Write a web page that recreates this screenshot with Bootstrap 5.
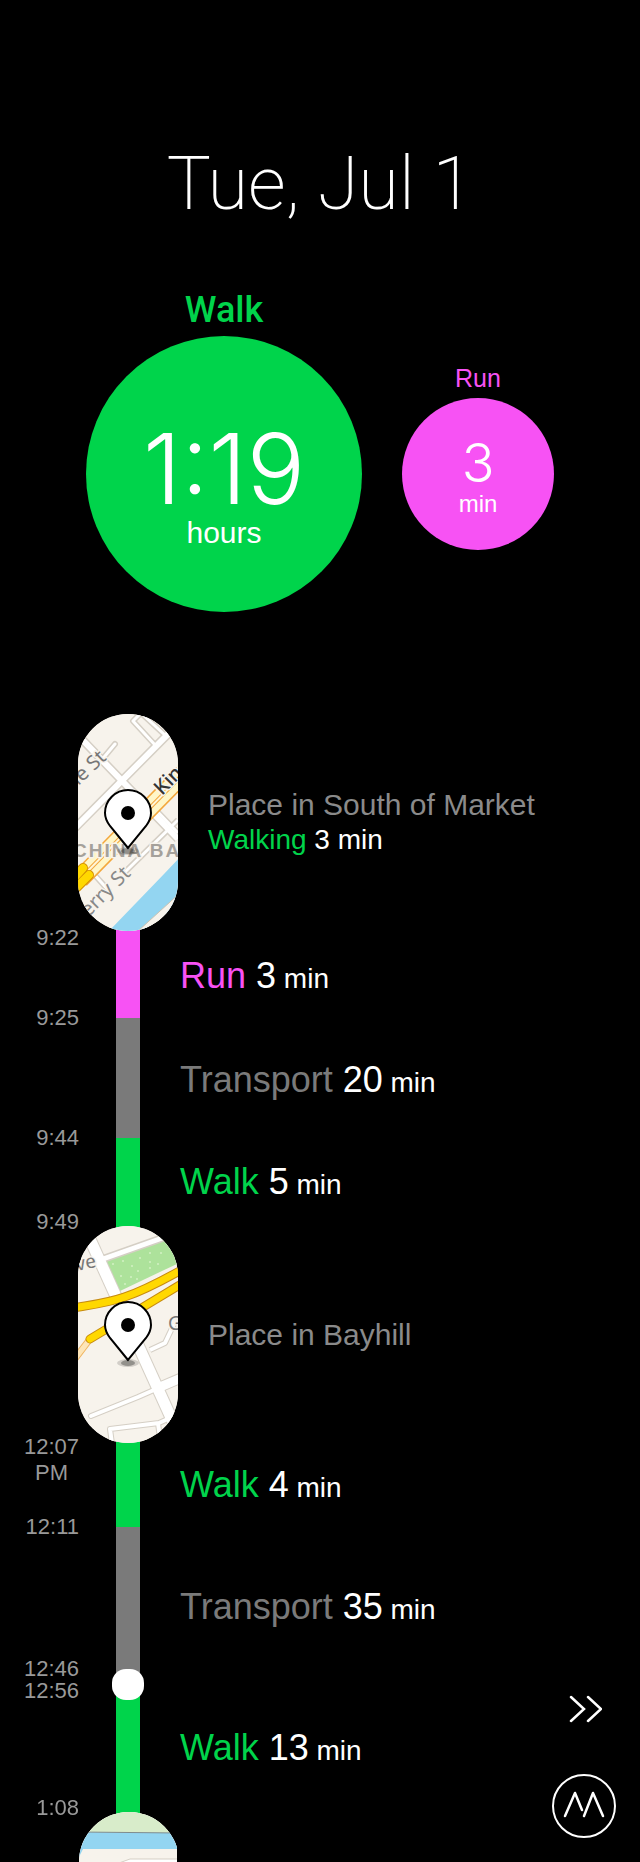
<!DOCTYPE html>
<html lang="en">
<head>
<meta charset="utf-8">
<meta name="viewport" content="width=device-width, initial-scale=1">
<title>Tue, Jul 1</title>
<link href="https://cdn.jsdelivr.net/npm/bootstrap@5.3.0/dist/css/bootstrap.min.css" rel="stylesheet">
<style>
  :root { --walk: #00d44b; --run: #f752f4; --transport: #7a7a7a; }
  body { background: #000; color: #fff; font-family: "Liberation Sans", Arial, sans-serif; }
  .day-title { font: 200 74px/90px Roboto, "Liberation Sans", sans-serif; padding-top: 139px; margin-bottom: 55px; }
  .c-walk { color: var(--walk); }
  .c-run { color: var(--run); }
  .c-transport { color: var(--transport); }
  .bg-walk { background: var(--walk); }
  .bg-run { background: var(--run); }
  .bg-transport { background: var(--transport); }

  .totals { gap: 40px; margin-bottom: 43px; }
  .total-lg { padding-bottom: 52px; }
  .total-lg .total-name { font: 500 36px/52px Roboto, "Liberation Sans", sans-serif; }
  .total-lg .disc { width: 276px; height: 276px; }
  .total-lg .amount { font: 300 97px/96px Inter, "Liberation Sans", sans-serif; margin-top: 22px; }
  .total-lg .unit { font-size: 30px; line-height: 32px; }
  .total-sm { padding-bottom: 40px; }
  .total-sm .total-name { font-size: 25px; line-height: 40px; }
  .total-sm .disc { width: 152px; height: 152px; }
  .total-sm .amount { font: 300 54px/56px Inter, "Liberation Sans", sans-serif; margin-top: 4px; }
  .total-sm .unit { font-size: 24px; line-height: 26px; }

  .entry { display: grid; grid-template-columns: 79px 98px 1fr; }
  .clock { font-size: 22px; line-height: 26px; color: #999; margin-top: -13px; text-align: center; justify-self: end; align-self: start; }
  .clock-pair { line-height: 22px; margin-top: -26px; }
  .track { width: 24px; justify-self: center; }
  .after-place .track { margin-top: -12px; }
  .before-place .track { margin-bottom: -12px; }
  .what { font-size: 36px; line-height: 40px; padding: 6px 0 0 3px; align-self: center; }
  .after-place .what { padding: 0 0 2px 3px; }
  .what small { font-size: 28px; }
  .place { position: relative; z-index: 1; }
  .pill { width: 100px; height: 217px; border-radius: 50px; overflow: hidden; justify-self: center; align-self: center; background: #f7f3ec; }
  .pill svg { display: block; }
  .place-text { font-size: 30px; line-height: 34px; color: #8a8a8a; padding-left: 31px; align-self: center; }
  .place-text .sub { font-size: 28px; line-height: 36px; color: #fff; }
  .stop { width: 32px; height: 31px; border-radius: 14px; background: #fff; margin: -15px -4px 0; }
  .peek { height: 50px; overflow: hidden; margin-top: 4px; }
  .h80 { height: 80px; } .h120 { height: 120px; } .h84 { height: 84px; }
  .h157 { height: 157px; } .h124 { height: 124px; }
  .h-place-lg { height: 231px; } .h-place { height: 225px; }
  .tools { right: 24px; bottom: 24px; gap: 50px; }
  .tools .btn { width: 64px; }
</style>
</head>
<body>
<main>
  <h1 class="day-title text-center">Tue, Jul 1</h1>

  <section class="totals d-flex justify-content-center align-items-center" aria-label="Totals">
    <div class="total-lg text-center">
      <div class="total-name c-walk">Walk</div>
      <div class="disc bg-walk rounded-circle d-flex flex-column justify-content-center">
        <div class="amount">1:19</div><div class="unit">hours</div>
      </div>
    </div>
    <div class="total-sm text-center">
      <div class="total-name c-run">Run</div>
      <div class="disc bg-run rounded-circle d-flex flex-column justify-content-center">
        <div class="amount">3</div><div class="unit">min</div>
      </div>
    </div>
  </section>

  <section aria-label="Timeline">
    <div class="entry place h-place-lg">
      <span></span>
      <div class="pill">
        <svg width="100" height="217" viewBox="0 0 100 217" role="img" aria-label="Map of South of Market">
          <defs>
            <g id="pin">
              <ellipse cx="50" cy="137" rx="11" ry="4" fill="#000" opacity=".15"/><ellipse cx="50" cy="137" rx="7" ry="3" fill="#000" opacity=".3"/>
              <path d="M50 134L32 112C29 108 27 104 27 99a23 23 0 0 1 46 0c0 5-2 9-5 13z" fill="#fff" stroke="#000" stroke-width="2"/>
              <circle cx="50" cy="99" r="7" fill="#000"/>
            </g>
          </defs>
          <rect width="100" height="217" fill="#f7f3ec"/>
          <g fill="none" stroke="#d5cfc5" stroke-linejoin="round">
            <path d="M-5 16L100 125M-5 116L100 10" stroke-width="9"/>
            <path d="M22 48L37 30" stroke-width="6" stroke-linecap="round"/>
            <path d="M78 32L55 7L66-4M62-2L88 22M14 158L32 178M76 94L100 119M45 160L100 106" stroke-width="6"/>
          </g>
          <g fill="none" stroke="#fff" stroke-linejoin="round">
            <path d="M-5 16L100 125M-5 116L100 10" stroke-width="6"/>
            <path d="M22 48L37 30" stroke-width="3" stroke-linecap="round"/>
            <path d="M78 32L55 7L66-4M62-2L88 22M14 158L32 178M76 94L100 119M45 160L100 106" stroke-width="3"/>
          </g>
          <path d="M2 165L105 60" stroke="#f3a73c" stroke-width="19"/>
          <path d="M2 165L105 60" stroke="#fff6c8" stroke-width="16"/>
          <path d="M2 165L105 60" stroke="#f3a73c" stroke-width="4"/>
          <path d="M2 165L105 60" stroke="#fff6d8" stroke-width="2"/>
          <path d="M-5 165L5 154M-2 174L11 161" stroke="#d49000" stroke-width="10" stroke-linecap="round"/>
          <path d="M-5 165L5 154M-2 174L11 161" stroke="#ffd800" stroke-width="8" stroke-linecap="round"/>
          <path d="M31 217L86 160L105 140V187L60 220z" fill="#93d5f1"/>
          <path d="M60 217L103 178V220z" fill="#f7f3ec" stroke="#c9c2b2"/>
          <g font-family="Noto Sans, sans-serif" stroke="#f7f3ec" stroke-width="3" paint-order="stroke" stroke-linejoin="round">
            <text transform="translate(-5 77) rotate(-43)" font-size="20" fill="#777">ne St</text>
            <text transform="translate(84 82) rotate(-45)" font-size="20" font-weight="500" fill="#333">King</text>
            <text x="-5" y="143" font-family="Liberation Sans, sans-serif" font-size="19" font-weight="700" fill="#a5a19b" letter-spacing="2">CHINA BA</text>
            <text transform="translate(1 213) rotate(-45)" font-size="20" fill="#888">Berry St</text>
          </g>
          <use href="#pin"/>
        </svg>
      </div>
      <div class="place-text">Place in South of Market<div class="sub"><span class="c-walk">Walking</span> 3 min</div></div>
    </div>

    <div class="entry after-place h80">
      <time class="clock">9:22</time><div class="track bg-run"></div>
      <div class="what"><span class="c-run">Run</span> 3<small> min</small></div>
    </div>
    <div class="entry h120">
      <time class="clock">9:25</time><div class="track bg-transport"></div>
      <div class="what"><span class="c-transport">Transport</span> 20<small> min</small></div>
    </div>
    <div class="entry before-place h84">
      <time class="clock">9:44</time><div class="track bg-walk"></div>
      <div class="what"><span class="c-walk">Walk</span> 5<small> min</small></div>
    </div>

    <div class="entry place h-place">
      <time class="clock">9:49</time>
      <div class="pill">
        <svg width="100" height="217" viewBox="0 0 100 217" role="img" aria-label="Map of Bayhill">
          <rect width="100" height="217" fill="#f7f3ec"/>
          <path d="M25 33L90 6L105 35L42 65z" fill="#ade29b"/>
          <path d="M34 38h2m8-3h2m7 5h2m6-8h2m8-5h2m-2 9h2m9-9h2M42 50h2m8 1h2m5-6h2m10-3h2m6-4h2M46 58h2m10-5h2" stroke="#c9edb9" stroke-width="2"/>
          <g fill="none" stroke="#d5cfc5" stroke-linejoin="round">
            <path d="M6 0L100 207" stroke-width="13"/>
            <path d="M25 33L90 10" stroke-width="8"/>
            <path d="M72 124L87 117L96 98M35 225L32 203L81 197L103 187M80 197L83 220" stroke-width="6"/>
            <path d="M13 190L60 171L110 149" stroke-width="6" stroke-linecap="round"/><path d="M75 164L110 149" stroke-width="11"/>
          </g>
          <g fill="none" stroke="#fff" stroke-linejoin="round">
            <path d="M6 0L100 207" stroke-width="11"/>
            <path d="M25 33L90 10" stroke-width="5"/>
            <path d="M72 124L87 117L96 98M35 225L32 203L81 197L103 187M80 197L83 220" stroke-width="4"/>
            <path d="M13 190L60 171L110 149" stroke-width="4" stroke-linecap="round"/><path d="M75 164L110 149" stroke-width="9"/>
          </g>
          <path d="M-4 134L12 113" stroke="#efb35d" stroke-width="7"/><path d="M-4 134L12 113" stroke="#fde5b8" stroke-width="5"/>
          <g fill="none" stroke-linecap="round">
            <path d="M-5 82C30 76 45 77 105 43M12 113L105 57" stroke="#c68a10" stroke-width="9"/>
            <path d="M-5 82C30 76 45 77 105 43M12 113L105 57" stroke="#ffd800" stroke-width="7"/>
          </g>
          <g font-family="Noto Sans, sans-serif" font-size="19" fill="#777" stroke="#f7f3ec" stroke-width="3" paint-order="stroke">
            <text transform="translate(-1 45) rotate(-12)">ve</text>
            <text x="90" y="104">G</text>
          </g>
          <use href="#pin"/>
        </svg>
      </div>
      <div class="place-text">Place in Bayhill</div>
    </div>

    <div class="entry after-place h80">
      <time class="clock">12:07<br>PM</time><div class="track bg-walk"></div>
      <div class="what"><span class="c-walk">Walk</span> 4<small> min</small></div>
    </div>
    <div class="entry h157">
      <time class="clock">12:11</time><div class="track bg-transport"></div>
      <div class="what"><span class="c-transport">Transport</span> 35<small> min</small></div>
    </div>
    <div class="entry before-place h124">
      <time class="clock clock-pair">12:46<br>12:56</time><div class="track bg-walk"><div class="stop"></div></div>
      <div class="what"><span class="c-walk">Walk</span> 13<small> min</small></div>
    </div>

    <div class="entry place">
      <time class="clock">1:08</time>
      <div class="peek">
        <div class="pill mx-auto">
          <svg width="100" height="217" viewBox="0 0 100 217" role="img" aria-label="Map of the waterfront">
            <rect width="100" height="217" fill="#f7f3ec"/>
            <path d="M0 0H100V21L0 20z" fill="#d8ecca"/>
            <path d="M0 20L100 21V37H4L0 45z" fill="#93d5f1"/>
            <path d="M0 20L100 21" stroke="#7f8c8d"/>
            <path d="M40 51L51 47H100V60H30z" fill="#fff" stroke="#d5cfc5"/>
          </svg>
        </div>
      </div>
      <span></span>
    </div>
  </section>
</main>

<div class="tools position-fixed d-flex flex-column">
  <button class="btn p-0 border-0" type="button" aria-label="Skip forward">
    <svg class="d-block mx-auto" width="36" height="30" viewBox="0 0 36 30" fill="none" stroke="#fff" stroke-width="2.5" stroke-linecap="round"><path d="M5 3L18 15L5 27M22 3L35 15L22 27"/></svg>
  </button>
  <button class="btn p-0 border-0" type="button" aria-label="Moves menu">
    <svg class="d-block" width="64" height="64" viewBox="0 0 64 64" fill="none" stroke="#fff" stroke-linecap="round" stroke-linejoin="round"><circle cx="32" cy="32" r="31" stroke-width="2"/><path d="M13 42L23 19L30 36M32 42L41 19L51 42" stroke-width="2.5"/></svg>
  </button>
</div>
<script src="https://cdn.jsdelivr.net/npm/bootstrap@5.3.0/dist/js/bootstrap.bundle.min.js"></script>
</body>
</html>
